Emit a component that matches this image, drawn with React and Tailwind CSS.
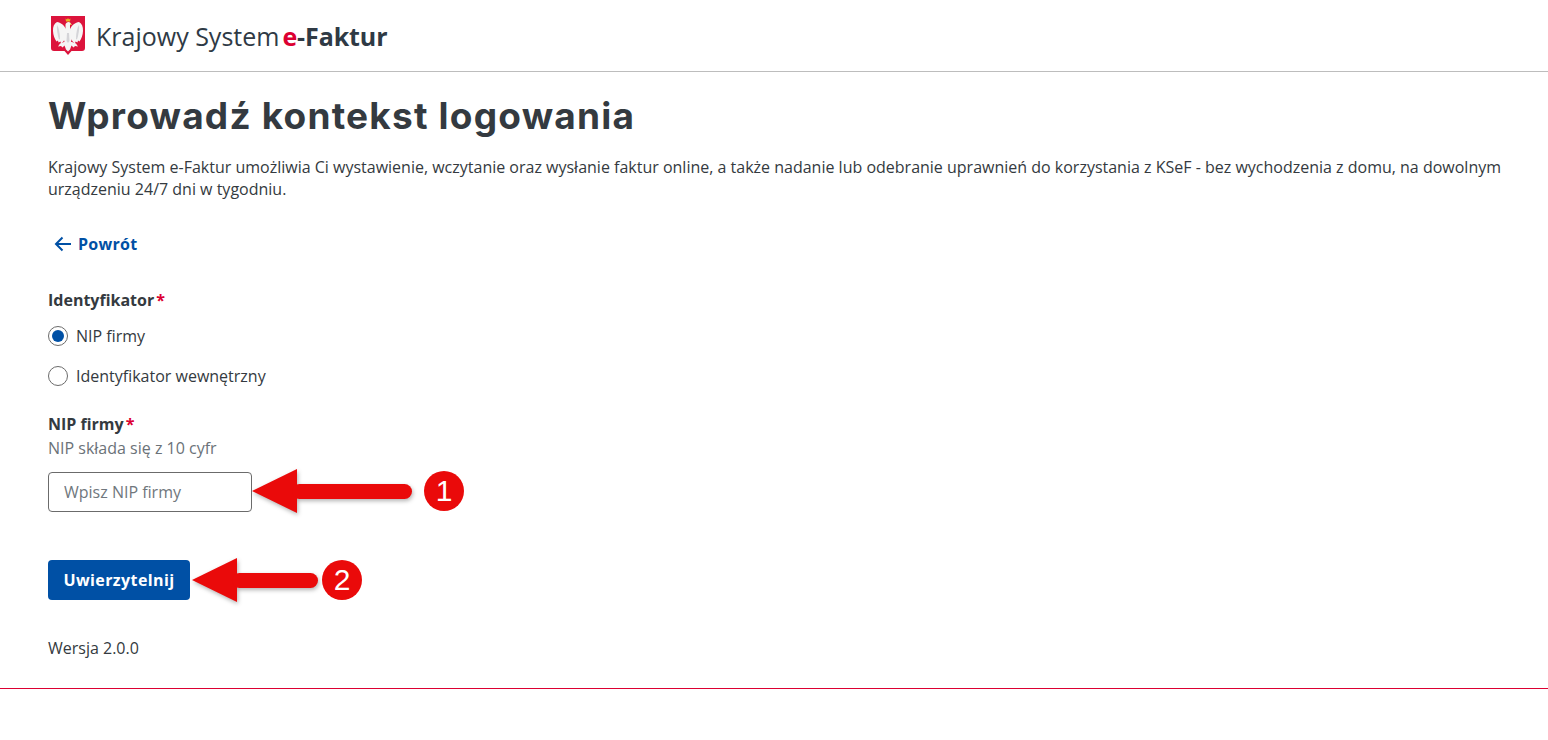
function Emblem() {
  return (
    <svg viewBox="0 0 34 39" className="h-[39px] w-[34px] shrink-0">
      <path d="M0 0h34v32q0 3-3 3H20.500L17 39l-3.500-4H3q-3 0-3-3z" fill="#dc143c" />
      <g fill="#f5f5f5">
        {/* left wing */}
        <path d="M15 13.500C13.500 9 9.500 6.500 6 6 3 7.500 1.800 11 2 15c.2 4 1.500 8 3.500 10.500l1.500-1 .5 2 2-1 .5 2 2-1.500 2.500-4z" />
        {/* right wing */}
        <path d="M19 13.500C20.500 9 24.500 6.500 28 6c3 1.500 4.200 5 4 9-.2 4-1.500 8-3.500 10.500l-1.500-1-.5 2-2-1-.5 2-2-1.500-2.500-4z" />
        {/* head and body */}
        <path d="M14.500 8.500C15 6 18 5.200 19.300 6.800l1.400 1.700-1.700.4V12l1.500 4 .5 6-1 4-1.500 2H15l-1.500-2-1-4 .5-6 1.500-4z" />
        {/* legs and tail */}
        <path d="M13 26l-4 1.500-2 3 3-.5 1.500 1.500 2-2 1.500 4 2 2 2-2 1.500-4 2 2 1.500-1.500 3 .5-2-3-4-1.500z" />
      </g>
      <g fill="#d4d4d8">
        <path d="M6 9c2 3 3 8 3 14l-1 .5C6.500 19 5.500 13 6 9z" />
        <path d="M28 9c-2 3-3 8-3 14l1 .5c1.500-4.500 2.500-10.500 2-14.500z" />
        <path d="M16 17h2l.5 8-1.500 2-1.500-2z" />
      </g>
      <path d="M15 5.500 14.500 2.500l1.500 1L17 2l1 1.500 1.500-1-.5 3z" fill="#e8b923" />
      <path d="M19.200 7.200l1.500 1.300-1.700.4z" fill="#e8b923" />
    </svg>
  );
}

function Required() {
  return <span className="ml-[2px] text-[#dc0032]">*</span>;
}

function Radio({ label, checked }) {
  return (
    <label className="flex h-5 items-center gap-2">
      <span className="flex size-5 items-center justify-center rounded-full border border-[#6b6b6b] bg-white">
        {checked && <span className="size-3 rounded-full bg-[#0050a5]" />}
      </span>
      {label}
    </label>
  );
}

// red arrow with a numbered circle, drawn over the screenshot
function Annotation({ number, width, gap, className }) {
  return (
    <div className={`absolute flex items-center ${className}`}>
      <svg
        width={width}
        height="50"
        viewBox={`0 0 ${width} 50`}
        className="drop-shadow-[1px_2px_2px_rgba(0,0,0,0.3)]"
      >
        <path d="M0 25 45 3v44z" fill="#ea0a0a" />
        <rect x="40" y="18" width={width - 41} height="15" rx="7.500" fill="#ea0a0a" />
      </svg>
      <span
        className={`flex size-10 items-center justify-center rounded-full bg-[#ea0a0a] font-['Liberation_Sans',sans-serif] text-[30px] leading-none text-white ${gap}`}
      >
        {number}
      </span>
    </div>
  );
}

export default function App() {
  return (
    <div className="relative h-[740px] overflow-hidden bg-white font-['Open_Sans',sans-serif] text-base leading-6 text-[#343a40]">
      <header className="flex h-[72px] items-center border-b border-[#bdbdbd] pl-[51px]">
        <Emblem />
        <span className="ml-[11px] text-[25px] text-[#2f3a45]">Krajowy System</span>
        <span className="ml-[3px] text-[25px] font-bold tracking-[-0.100px] text-[#2f3a45]">
          <span className="text-[#dc0032]">e</span>-Faktur
        </span>
      </header>

      <main className="h-[617px] border-b border-[#dc0032] pt-[22px] pr-10 pl-12">
        <h1 className="font-['Inter',sans-serif] text-[37px] leading-[44px] font-bold tracking-[1.200px] text-[#343a40]">
          Wprowadź kontekst logowania
        </h1>
        <p className="mt-[18px] leading-[22px]">
          Krajowy System e-Faktur umożliwia Ci wystawienie, wczytanie oraz wysłanie faktur online, a także nadanie lub odebranie uprawnień do korzystania z KSeF - bez wychodzenia z domu, na dowolnym urządzeniu 24/7 dni w tygodniu.
        </p>

        <a className="mt-[32px] flex items-center gap-[6px] font-bold tracking-[0.300px] text-[#0050a5]">
          <svg width="18" height="16" viewBox="0 0 18 16" className="ml-[6px]" fill="none" stroke="currentColor" strokeWidth="2">
            <path d="M17 8H2M8.500 1.500 2 8l6.500 6.500" />
          </svg>
          Powrót
        </a>

        <div className="mt-[32px] font-bold">
          Identyfikator
          <Required />
        </div>
        <div className="mt-[14px] flex flex-col gap-5">
          <Radio label="NIP firmy" checked />
          <Radio label="Identyfikator wewnętrzny" />
        </div>

        <div className="mt-[26px] font-bold">
          NIP firmy
          <Required />
        </div>
        <div className="text-[#6b7278]">NIP składa się z 10 cyfr</div>
        <input
          placeholder="Wpisz NIP firmy"
          className="mt-[12px] block h-10 w-[204px] rounded-[4px] border border-[#6b6b6b] px-[15px] placeholder:text-[#70777d]"
        />

        <button className="mt-12 flex h-10 w-[142px] items-center justify-center rounded-[4px] bg-[#0050a5] font-bold tracking-[0.400px] text-white">
          Uwierzytelnij
        </button>

        <div className="mt-[36px]">Wersja 2.0.0</div>
      </main>

      <Annotation number="1" width={161} gap="ml-[11px]" className="top-[466px] left-[252px]" />
      <Annotation number="2" width={127} gap="ml-[3px]" className="top-[555px] left-[192px]" />
    </div>
  );
}
